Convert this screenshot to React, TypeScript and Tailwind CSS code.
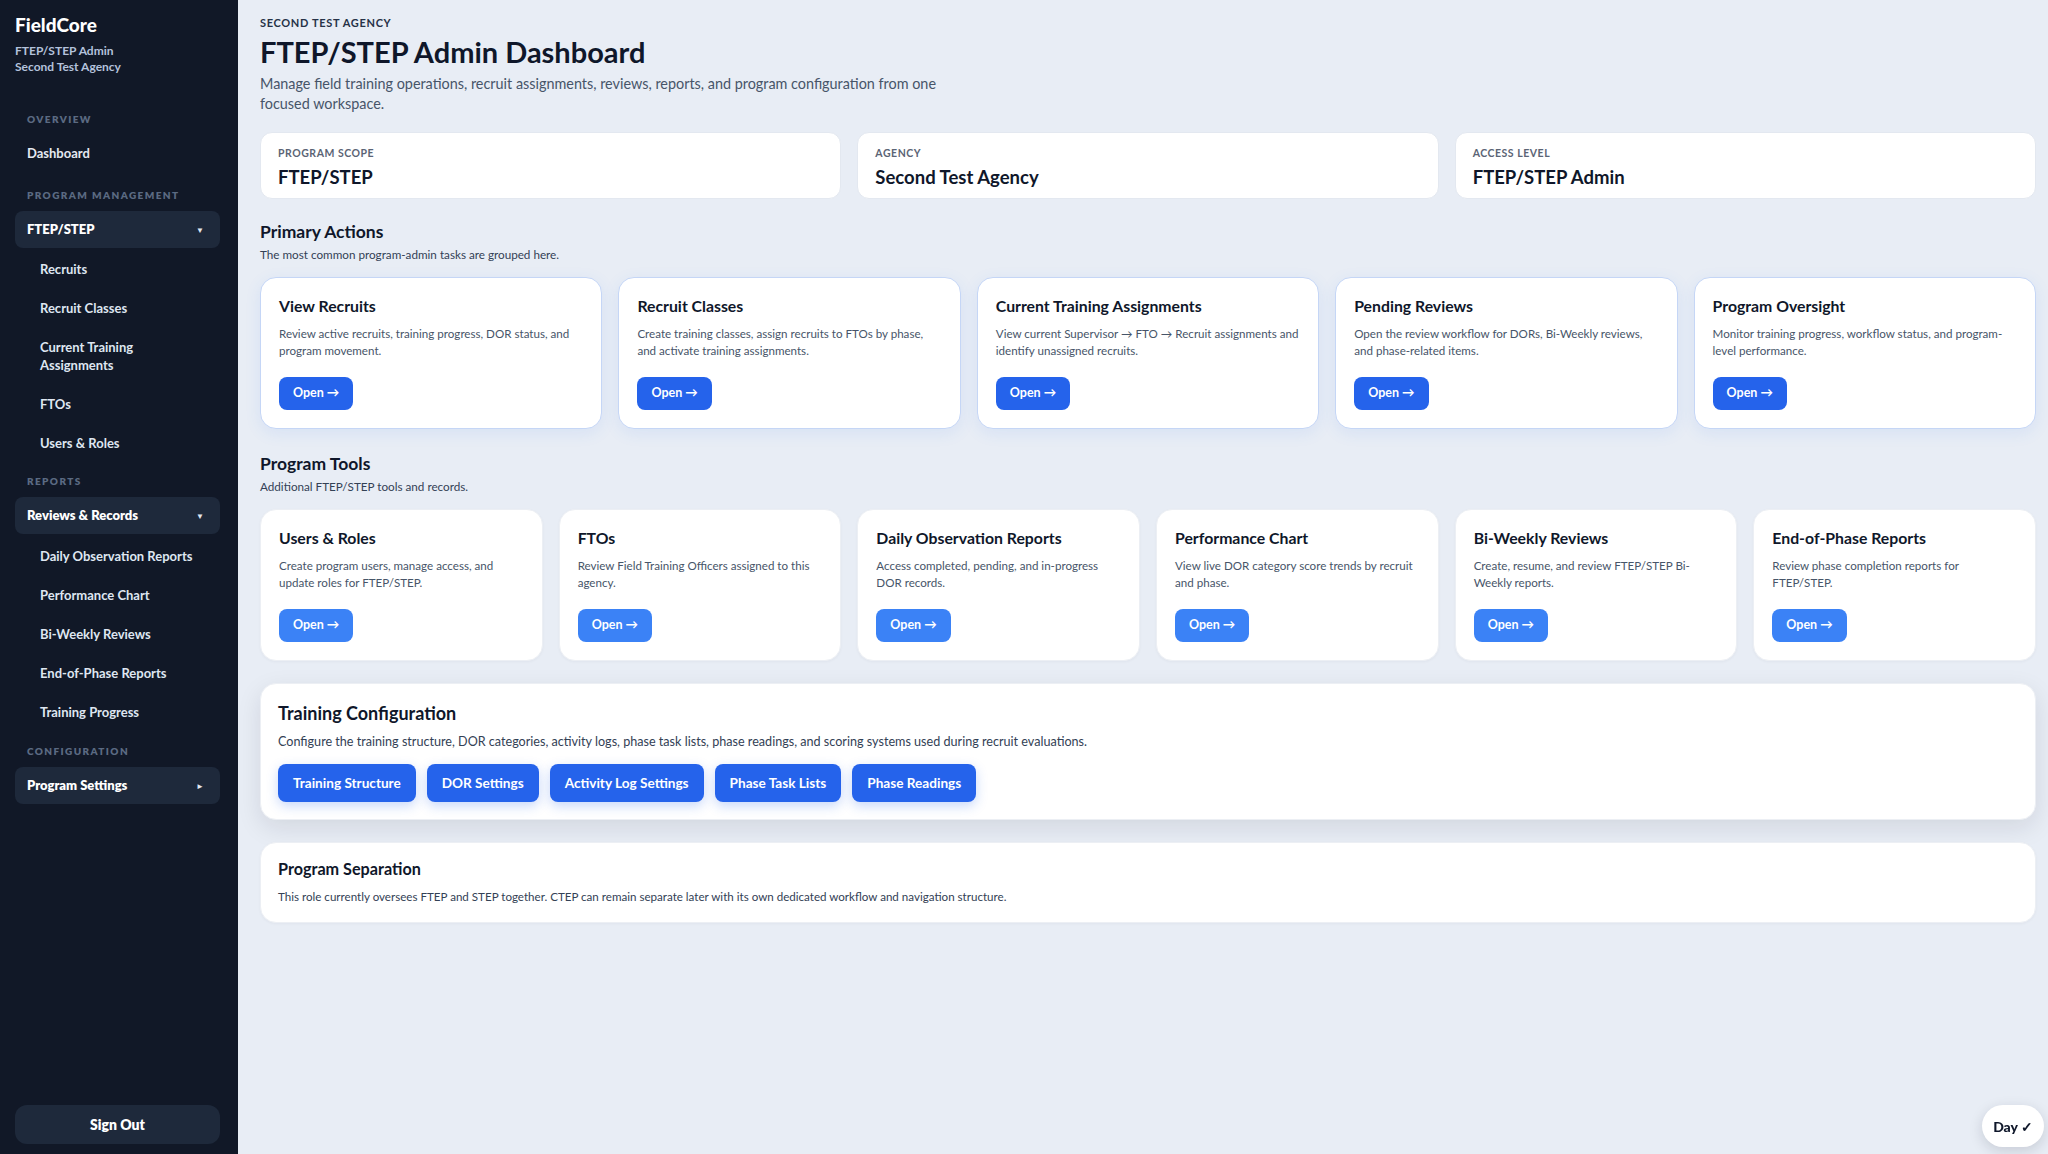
const primaryActions = [
  {
    title: 'View Recruits',
    text: 'Review active recruits, training progress, DOR status, and program movement.',
  },
  {
    title: 'Recruit Classes',
    text: 'Create training classes, assign recruits to FTOs by phase, and activate training assignments.',
  },
  {
    title: 'Current Training Assignments',
    text: 'View current Supervisor → FTO → Recruit assignments and identify unassigned recruits.',
  },
  {
    title: 'Pending Reviews',
    text: 'Open the review workflow for DORs, Bi-Weekly reviews, and phase-related items.',
  },
  {
    title: 'Program Oversight',
    text: 'Monitor training progress, workflow status, and program-level performance.',
  },
];

const programTools = [
  { title: 'Users & Roles', text: 'Create program users, manage access, and update roles for FTEP/STEP.' },
  { title: 'FTOs', text: 'Review Field Training Officers assigned to this agency.' },
  { title: 'Daily Observation Reports', text: 'Access completed, pending, and in-progress DOR records.' },
  { title: 'Performance Chart', text: 'View live DOR category score trends by recruit and phase.' },
  { title: 'Bi-Weekly Reviews', text: 'Create, resume, and review FTEP/STEP Bi-Weekly reports.' },
  { title: 'End-of-Phase Reports', text: 'Review phase completion reports for FTEP/STEP.' },
];

const configButtons = ['Training Structure', 'DOR Settings', 'Activity Log Settings', 'Phase Task Lists', 'Phase Readings'];

function SectionLabel({ children, className = '' }: { children: React.ReactNode; className?: string }) {
  return (
    <div className={`px-3 text-[10px] leading-[14px] font-extrabold tracking-[0.14em] text-[#5b6a82] ${className}`}>
      {children}
    </div>
  );
}

function NavGroup({ label, open, className = '' }: { label: string; open: boolean; className?: string }) {
  return (
    <div
      className={`flex items-center justify-between h-[37px] px-3 rounded-lg bg-[#1e293b] text-[13px] font-extrabold text-white ${className}`}
    >
      <span>{label}</span>
      <span className="text-[8px] text-slate-200 pr-1">{open ? '▼' : '►'}</span>
    </div>
  );
}

function SubItem({ children }: { children: React.ReactNode }) {
  return <div className="pl-[25px] pr-3 py-[10px] text-[13px] leading-[18px] font-bold text-[#dfe6f1]">{children}</div>;
}

function Sidebar() {
  return (
    <aside className="w-[238px] shrink-0 bg-[#111827] flex flex-col justify-between pl-[15px] pr-[18px] pt-[14px] pb-[10px]">
      <div>
        <div className="text-[19px] leading-[22px] font-black text-white">FieldCore</div>
        <div className="mt-[7px] text-[12px] leading-4 font-bold text-[#b4c2dc]">
          <div>FTEP/STEP Admin</div>
          <div>Second Test Agency</div>
        </div>

        <SectionLabel className="mt-[37px]">OVERVIEW</SectionLabel>
        <div className="mt-[8px] px-3 py-[10px] text-[13px] leading-[18px] font-bold text-[#e5e9f1]">Dashboard</div>

        <SectionLabel className="mt-[16px]">PROGRAM MANAGEMENT</SectionLabel>
        <NavGroup label="FTEP/STEP" open className="mt-[9px]" />
        <div className="mt-[2px] flex flex-col gap-px">
          <SubItem>Recruits</SubItem>
          <SubItem>Recruit Classes</SubItem>
          <SubItem>
            Current Training
            <br />
            Assignments
          </SubItem>
          <SubItem>FTOs</SubItem>
          <SubItem>Users &amp; Roles</SubItem>
        </div>

        <SectionLabel className="mt-[12px]">REPORTS</SectionLabel>
        <NavGroup label="Reviews & Records" open className="mt-[9px]" />
        <div className="mt-[3px] flex flex-col gap-px">
          <SubItem>Daily Observation Reports</SubItem>
          <SubItem>Performance Chart</SubItem>
          <SubItem>Bi-Weekly Reviews</SubItem>
          <SubItem>End-of-Phase Reports</SubItem>
          <SubItem>Training Progress</SubItem>
        </div>

        <SectionLabel className="mt-[13px]">CONFIGURATION</SectionLabel>
        <NavGroup label="Program Settings" open={false} className="mt-[9px]" />
      </div>

      <button className="h-[39px] w-full rounded-xl bg-[#1e293b] text-[14px] font-extrabold text-white">Sign Out</button>
    </aside>
  );
}

function StatCard({ label, value }: { label: string; value: string }) {
  return (
    <div className="bg-white rounded-xl border border-[#e3e8f0] px-[17px] pt-[13px] h-[67px]">
      <div className="text-[10.5px] leading-[14px] font-bold tracking-[0.05em] text-[#5b6475]">{label}</div>
      <div className="mt-[5px] text-[18.5px] leading-[24px] font-bold text-[#0f172a]">{value}</div>
    </div>
  );
}

function OpenButton({ light }: { light?: boolean }) {
  return (
    <button
      className={`h-[33px] px-[14px] rounded-lg text-[12.5px] font-bold text-white ${
        light ? 'bg-[#3b82f6]' : 'bg-[#2563eb]'
      }`}
    >
      Open →
    </button>
  );
}

function ActionCard({ title, text, primary }: { title: string; text: string; primary?: boolean }) {
  return (
    <div
      className={`flex flex-col items-start h-[152px] p-[18px] rounded-2xl bg-white ${
        primary
          ? 'border border-[#c5d6f6] shadow-[0_4px_16px_rgba(59,130,246,0.10)]'
          : 'border border-[#eceff4] shadow-[0_1px_3px_rgba(15,23,42,0.04)]'
      }`}
    >
      <div className="text-[15.8px] leading-[20px] font-bold text-[#0f172a]">{title}</div>
      <p className="mt-[9px] text-[11.6px] leading-[17px] text-[#475569]">{text}</p>
      <div className="mt-auto">
        <OpenButton light={!primary} />
      </div>
    </div>
  );
}

function SectionHeading({ title, sub }: { title: string; sub: string }) {
  return (
    <div>
      <h2 className="text-[17.5px] leading-[22px] font-bold text-[#0f172a]">{title}</h2>
      <p className="mt-[3px] text-[11.7px] leading-[16px] text-[#334155]">{sub}</p>
    </div>
  );
}

export default function App() {
  return (
    <div className="min-h-screen flex bg-[#e8edf5] font-['Lato',sans-serif]">
      <Sidebar />

      <main className="flex-1 pl-[22px] pr-[12px] pt-[16px] pb-10 text-[#0f172a]">
        <div className="text-[11px] leading-[13px] font-bold tracking-[0.06em] text-[#263247]">SECOND TEST AGENCY</div>
        <h1 className="mt-[4px] text-[29px] leading-[38px] font-bold text-[#0f172a]">FTEP/STEP Admin Dashboard</h1>
        <p className="mt-[3px] max-w-[700px] text-[14.4px] leading-[20px] text-[#475569]">
          Manage field training operations, recruit assignments, reviews, reports, and program configuration from one
          focused workspace.
        </p>

        <div className="mt-[18px] grid grid-cols-3 gap-4">
          <StatCard label="PROGRAM SCOPE" value="FTEP/STEP" />
          <StatCard label="AGENCY" value="Second Test Agency" />
          <StatCard label="ACCESS LEVEL" value="FTEP/STEP Admin" />
        </div>

        <div className="mt-[22px]">
          <SectionHeading title="Primary Actions" sub="The most common program-admin tasks are grouped here." />
          <div className="mt-[15px] grid grid-cols-5 gap-4">
            {primaryActions.map((a) => (
              <ActionCard key={a.title} title={a.title} text={a.text} primary />
            ))}
          </div>
        </div>

        <div className="mt-[24px]">
          <SectionHeading title="Program Tools" sub="Additional FTEP/STEP tools and records." />
          <div className="mt-[15px] grid grid-cols-6 gap-4">
            {programTools.map((t) => (
              <ActionCard key={t.title} title={t.title} text={t.text} />
            ))}
          </div>
        </div>

        <section className="mt-[22px] rounded-2xl bg-white border border-[#eceff4] px-[17px] pt-[17px] pb-[17px] shadow-[0_8px_24px_rgba(15,23,42,0.10)]">
          <h3 className="text-[18px] leading-[24px] font-bold text-[#0f172a]">Training Configuration</h3>
          <p className="mt-[8px] text-[12.6px] leading-[18px] text-[#334155]">
            Configure the training structure, DOR categories, activity logs, phase task lists, phase readings, and scoring
            systems used during recruit evaluations.
          </p>
          <div className="mt-[13px] flex gap-[11px]">
            {configButtons.map((b) => (
              <button
                key={b}
                className="h-[38px] px-[15px] rounded-lg bg-[#2563eb] text-[13.6px] font-bold text-white shadow-[0_4px_12px_rgba(37,99,235,0.25)]"
              >
                {b}
              </button>
            ))}
          </div>
        </section>

        <section className="mt-[22px] rounded-2xl bg-white border border-[#eceff4] px-[17px] pt-[15px] pb-[17px] shadow-[0_1px_3px_rgba(15,23,42,0.04)]">
          <h3 className="text-[16.2px] leading-[22px] font-bold text-[#0f172a]">Program Separation</h3>
          <p className="mt-[8px] text-[11.6px] leading-[17px] text-[#334155]">
            This role currently oversees FTEP and STEP together. CTEP can remain separate later with its own dedicated
            workflow and navigation structure.
          </p>
        </section>
      </main>

      <div className="fixed right-[4px] bottom-[7px] h-[42px] px-[11px] flex items-center rounded-full bg-white shadow-[0_4px_14px_rgba(15,23,42,0.15)] text-[14px] font-black text-[#0f172a]">
        Day ✓
      </div>
    </div>
  );
}
